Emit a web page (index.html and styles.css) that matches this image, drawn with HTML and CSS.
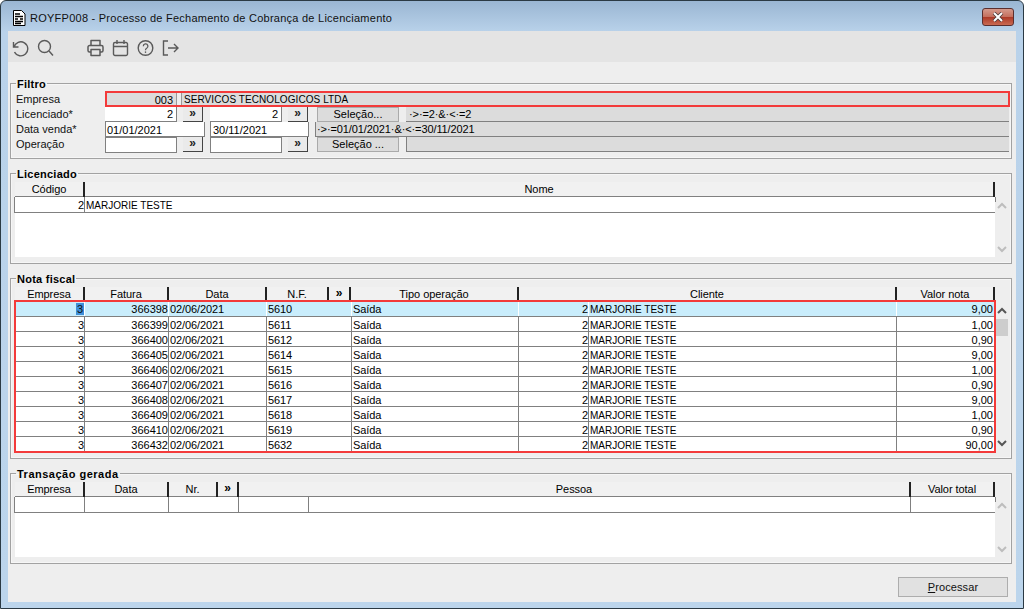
FILE: index.html
```html
<!DOCTYPE html>
<html lang="pt-BR">
<head>
<meta charset="utf-8">
<title>ROYFP008</title>
<link rel="stylesheet" href="styles.css">
</head>
<body>
<div class="window">
  <header class="titlebar">
    <svg class="doc-icon" width="14" height="16" viewBox="0 0 14 16"><path d="M1.500.5h8l3.500 3.500v11.500h-11.500z" fill="#fff" stroke="#000"/><path d="M3 4h5M3 6.500h8M3 9h3M8 9h3M3 11.500h8M3 13.500h6" stroke="#000" stroke-width="1.300"/></svg>
    <span class="title-text">ROYFP008 - Processo de Fechamento de Cobrança de Licenciamento</span>
    <div class="close-btn"><svg width="14" height="10" viewBox="0 0 14 10"><path d="M3 1l8 8M11 1l-8 8" stroke="#4a3a3a" stroke-width="3.600"/><path d="M3 1l8 8M11 1l-8 8" stroke="#fff" stroke-width="2"/></svg></div>
  </header>
  <div class="client">
    <nav class="toolbar">
      <svg class="tool" width="18" height="18" viewBox="0 0 18 18"><path d="M2.500 3v5h5M3 8a7 7 0 1 1 .5 5" fill="none" stroke="#5a5a5a" stroke-width="1.400"/></svg>
      <svg class="tool" width="17" height="18" viewBox="0 0 17 18"><circle cx="7.500" cy="7.500" r="6" fill="none" stroke="#5a5a5a" stroke-width="1.400"/><path d="M12 12l4 4.500" stroke="#5a5a5a" stroke-width="1.400"/></svg>
      <svg class="tool tool-print" width="17" height="18" viewBox="0 0 17 18"><path d="M4 6V1.500h9V6M4 13H2.500a1.500 1.500 0 0 1-1.500-1.500V8a1.500 1.500 0 0 1 1.500-1.500h12A1.500 1.500 0 0 1 16 8v3.500a1.500 1.500 0 0 1-1.500 1.500H13M4 10.500h9v6H4z" fill="none" stroke="#5a5a5a" stroke-width="1.500" stroke-linejoin="round"/></svg>
      <svg class="tool" width="17" height="18" viewBox="0 0 17 18"><path d="M3 3.500h11a1.500 1.500 0 0 1 1.500 1.500v10a1.500 1.500 0 0 1-1.500 1.500H3A1.500 1.500 0 0 1 1.500 15V5A1.500 1.500 0 0 1 3 3.500zM1.500 7.500h14M5 1v4M12 1v4" fill="none" stroke="#5a5a5a" stroke-width="1.400"/></svg>
      <svg class="tool" width="17" height="18" viewBox="0 0 17 18"><circle cx="8.500" cy="9" r="7.300" fill="none" stroke="#5a5a5a" stroke-width="1.400"/><path d="M6.300 7.200a2.300 2.300 0 1 1 3.400 2c-.9.500-1.200 1-1.200 2" fill="none" stroke="#5a5a5a" stroke-width="1.300"/><path d="M8.500 12.400v1.500" stroke="#5a5a5a" stroke-width="1.300"/></svg>
      <svg class="tool" width="17" height="18" viewBox="0 0 17 18"><path d="M6 2H1.500v14H6M6 9h10M12 5l4 4-4 4" fill="none" stroke="#5a5a5a" stroke-width="1.400"/></svg>
    </nav>
    <main class="content">
      <fieldset class="group group-filtro">
        <legend>Filtro</legend>
        <div class="frow frow-empresa">
          <span class="flabel">Empresa</span>
          <div class="red-box">
            <span class="ro ro-code">003</span>
            <span class="ro ro-name">SERVICOS TECNOLOGICOS LTDA</span>
          </div>
        </div>
        <div class="frow">
          <span class="flabel">Licenciado*</span>
          <span class="inp inp-num">2</span><span class="more">»</span>
          <span class="inp inp-num inp-second">2</span><span class="more">»</span>
          <span class="sel-btn">Seleção...</span>
          <span class="result result-short">·&gt;·=2·&amp;·&lt;·=2</span>
        </div>
        <div class="frow">
          <span class="flabel">Data venda*</span>
          <span class="inp-date">01/01/2021</span>
          <span class="inp-date inp-date2">30/11/2021</span>
          <span class="result result-long">·&gt;·=01/01/2021·&amp;·&lt;·=30/11/2021</span>
        </div>
        <div class="frow">
          <span class="flabel">Operação</span>
          <span class="inp inp-box"></span><span class="more">»</span>
          <span class="inp inp-box inp-second"></span><span class="more">»</span>
          <span class="sel-btn">Seleção ...</span>
          <span class="result result-short result-empty"></span>
        </div>
      </fieldset>

      <fieldset class="group group-lic">
        <legend>Licenciado</legend>
        <div class="gridwrap">
          <div class="grid">
            <div class="hrow cols-lic"><span>Código</span><span>Nome</span></div>
            <div class="rows rows-short">
              <div class="row cols-lic"><span class="r">2</span><span class="caps">MARJORIE TESTE</span></div>
            </div>
          </div>
          <div class="sbar sbar-off">
            <svg width="12" height="8" viewBox="0 0 12 8"><path d="M2 6l4-4 4 4" fill="none" stroke="currentColor" stroke-width="2"/></svg>
            <svg width="12" height="8" viewBox="0 0 12 8"><path d="M2 2l4 4 4-4" fill="none" stroke="currentColor" stroke-width="2"/></svg>
          </div>
        </div>
      </fieldset>

      <fieldset class="group group-nota">
        <legend>Nota fiscal</legend>
        <div class="gridwrap">
          <div class="grid">
            <div class="hrow hrow-nota cols-nota-h"><span>Empresa</span><span>Fatura</span><span>Data</span><span>N.F.</span><span class="hmore">»</span><span>Tipo operação</span><span>Cliente</span><span>Valor nota</span></div>
            <div class="rows rows-red">
              <div class="row cols-nota current"><span class="r"><b class="mark">3</b></span><span class="r">366398</span><span>02/06/2021</span><span>5610</span><span class="focus">Saída</span><span class="r">2</span><span class="caps">MARJORIE TESTE</span><span class="r">9,00</span></div>
              <div class="row cols-nota"><span class="r">3</span><span class="r">366399</span><span>02/06/2021</span><span>5611</span><span>Saída</span><span class="r">2</span><span class="caps">MARJORIE TESTE</span><span class="r">1,00</span></div>
              <div class="row cols-nota"><span class="r">3</span><span class="r">366400</span><span>02/06/2021</span><span>5612</span><span>Saída</span><span class="r">2</span><span class="caps">MARJORIE TESTE</span><span class="r">0,90</span></div>
              <div class="row cols-nota"><span class="r">3</span><span class="r">366405</span><span>02/06/2021</span><span>5614</span><span>Saída</span><span class="r">2</span><span class="caps">MARJORIE TESTE</span><span class="r">9,00</span></div>
              <div class="row cols-nota"><span class="r">3</span><span class="r">366406</span><span>02/06/2021</span><span>5615</span><span>Saída</span><span class="r">2</span><span class="caps">MARJORIE TESTE</span><span class="r">1,00</span></div>
              <div class="row cols-nota"><span class="r">3</span><span class="r">366407</span><span>02/06/2021</span><span>5616</span><span>Saída</span><span class="r">2</span><span class="caps">MARJORIE TESTE</span><span class="r">0,90</span></div>
              <div class="row cols-nota"><span class="r">3</span><span class="r">366408</span><span>02/06/2021</span><span>5617</span><span>Saída</span><span class="r">2</span><span class="caps">MARJORIE TESTE</span><span class="r">9,00</span></div>
              <div class="row cols-nota"><span class="r">3</span><span class="r">366409</span><span>02/06/2021</span><span>5618</span><span>Saída</span><span class="r">2</span><span class="caps">MARJORIE TESTE</span><span class="r">1,00</span></div>
              <div class="row cols-nota"><span class="r">3</span><span class="r">366410</span><span>02/06/2021</span><span>5619</span><span>Saída</span><span class="r">2</span><span class="caps">MARJORIE TESTE</span><span class="r">0,90</span></div>
              <div class="row cols-nota"><span class="r">3</span><span class="r">366432</span><span>02/06/2021</span><span>5632</span><span>Saída</span><span class="r">2</span><span class="caps">MARJORIE TESTE</span><span class="r">90,00</span></div>
            </div>
          </div>
          <div class="sbar sbar-on">
            <svg width="12" height="8" viewBox="0 0 12 8"><path d="M2 6l4-4 4 4" fill="none" stroke="currentColor" stroke-width="2"/></svg>
            <div class="thumb"></div>
            <svg class="sdown" width="12" height="8" viewBox="0 0 12 8"><path d="M2 2l4 4 4-4" fill="none" stroke="currentColor" stroke-width="2"/></svg>
          </div>
        </div>
      </fieldset>

      <fieldset class="group group-trans">
        <legend>Transação gerada</legend>
        <div class="gridwrap">
          <div class="grid">
            <div class="hrow cols-trans-h"><span>Empresa</span><span>Data</span><span>Nr.</span><span class="hmore">»</span><span>Pessoa</span><span>Valor total</span></div>
            <div class="rows rows-short">
              <div class="row cols-trans"><span></span><span></span><span></span><span></span><span></span><span></span></div>
            </div>
          </div>
          <div class="sbar sbar-off">
            <svg width="12" height="8" viewBox="0 0 12 8"><path d="M2 6l4-4 4 4" fill="none" stroke="currentColor" stroke-width="2"/></svg>
            <svg width="12" height="8" viewBox="0 0 12 8"><path d="M2 2l4 4 4-4" fill="none" stroke="currentColor" stroke-width="2"/></svg>
          </div>
        </div>
      </fieldset>

      <div class="actions"><button class="process" type="button"><u>P</u>rocessar</button></div>
    </main>
  </div>
</div>
</body>
</html>
```
FILE: styles.css
```css
* { box-sizing: border-box; }
html, body { margin: 0; padding: 0; }
body {
  width: 1024px;
  height: 610px;
  overflow: hidden;
  background: #fff;
  font: 11px/14px "Liberation Sans", Arial, sans-serif;
  color: #000;
}
.window {
  width: 1024px;
  height: 609px;
  display: flex;
  flex-direction: column;
  padding: 0 7px 6px;
  border: 1px solid #2b3a44;
  border-radius: 6px 6px 0 0;
  background: linear-gradient(180deg, #9ab6d3 0, #b9d2ea 31px, #bcd5ec 100%);
}
.titlebar {
  height: 30px;
  flex: none;
  display: flex;
  align-items: center;
  padding-left: 4px;
}
.doc-icon { flex: none; margin-top: 3px; }
.title-text {
  margin: 4px 0 0 4px;
  font: 11px/16px "Liberation Sans", Arial, sans-serif;
  letter-spacing: .25px;
  color: #111;
  flex: 1;
}
.close-btn {
  width: 32px;
  height: 18px;
  margin: 1px 2px 0 0;
  display: flex;
  align-items: center;
  justify-content: center;
  border: 1px solid #5b2f2f;
  border-radius: 3px;
  background: linear-gradient(180deg, #d59a8c 0, #c5705f 48%, #ad3a28 52%, #c96a52 100%);
}
.client {
  flex: 1;
  display: flex;
  flex-direction: column;
  background: #eeeeee;
  min-height: 0;
}
.toolbar {
  height: 31px;
  flex: none;
  display: flex;
  align-items: center;
  padding: 2px 0 0 3px;
  background: #e4e4e4;
  gap: 8px;
}
.tool { flex: none; }
.tool-print { margin-left: 25px; }
.content {
  flex: 1;
  padding: 15px 0 0 2px;
  display: flex;
  flex-direction: column;
  gap: 8px;
}
.group {
  margin: 0;
  width: 1002px;
  padding: 0 0 0 4px;
  border: 1px solid #a2a2a2;
  box-shadow: inset 0 0 0 1px #f6f6f6;
  flex: none;
}
.group legend {
  margin-left: 1px;
  padding: 1px 1px 0;
  height: 13px;
  font-weight: 700;
  font-size: 11px;
  line-height: 13px;
  letter-spacing: .25px;
}
.group-trans legend { letter-spacing: .5px; }
.group-filtro { height: 82px; }
.group-lic { height: 97px; padding-top: 2px; }
.group-nota { height: 187px; padding-top: 2px; }
.group-trans { height: 97px; padding-top: 2px; }

.frow { display: flex; height: 15px; }
.frow-empresa { height: 16px; margin-top: 1px; }
.flabel { width: 90px; flex: none; color: #111; padding-left: 1px; }
.frow-empresa .flabel { padding-top: 1px; }
.red-box { flex: 1; display: flex; height: 16px; margin-right: 1px; outline: 2px solid #f33a3a; outline-offset: -2px; }
.ro { background: #dcdcdc; padding: 2px 3px 0; height: 16px; }
.ro-code { width: 72px; flex: none; text-align: right; border-right: 1px solid #9a9a9a; }
.ro-name { flex: 1; margin-left: 4px; border-left: 1px solid #9a9a9a; padding-left: 2px; font-size: 10px; letter-spacing: .08px; }
.inp { width: 72px; height: 15px; background: #fff; border-right: 1px solid #808080; border-bottom: 1px solid #808080; flex: none; padding: 0 3px; }
.inp-num { text-align: right; }
.inp-box { border: 1px solid #808080; height: 16px; }
.inp-second { margin-left: 7px; }
.more {
  width: 20px;
  height: 15px;
  margin-left: 6px;
  flex: none;
  text-align: center;
  font-weight: 700;
  line-height: 13px;
  font-size: 12px;
  background: #eaeaea;
  border-right: 1px solid #444;
  border-bottom: 1px solid #444;
  color: #222;
}
.sel-btn {
  width: 82px;
  height: 15px;
  margin-left: 9px;
  flex: none;
  background: #dcdcdc;
  border: 1px solid #aaa;
  text-align: center;
  line-height: 13px;
}
.result { flex: 1; height: 15px; background: #dcdcdc; padding: 0 3px; margin-right: 2px; letter-spacing: -.1px; }
.result-short { margin-left: 7px; border-bottom: 1px solid #808080; }
.result-long { margin-left: 6px; border-left: 1px solid #808080; border-bottom: 1px solid #808080; padding-left: 1px; }
.result-empty { border: 1px solid #808080; border-width: 1px 0 1px 1px; height: 16px; margin-top: -1px; }
.inp-date { width: 100px; height: 15px; background: #fff; border: 1px solid #808080; border-top-width: 0; padding: 1px 0 0 1px; flex: none; }
.inp-date2 { margin-left: 5px; width: 99px; padding-left: 2px; }

.gridwrap { display: flex; }
.grid { width: 980px; flex: none; }
.hrow { display: grid; height: 15px; background: #f1f1f1; border-bottom: 1px solid #808080; }
.hrow-nota { height: 14px; border-bottom: 0; }
.hrow span { text-align: center; border-right: 2px solid #222; line-height: 15px; letter-spacing: -.05px; }
.hrow .hmore { font-size: 12px; font-weight: 700; line-height: 13px; }
.cols-lic { grid-template-columns: 70px 1fr; }
.cols-nota-h { grid-template-columns: 70px 84px 98px 62px 22px 168px 378px 98px; }
.cols-nota { grid-template-columns: 70px 84px 98px 85px 167px 70px 308px 98px; }
.cols-trans-h { grid-template-columns: 70px 84px 49px 21px 672px 84px; }
.cols-trans { grid-template-columns: 70px 84px 70px 70px 602px 84px; }
.rows { background: #fff; }
.rows-short { height: 60px; }
.rows-red { outline: 2px solid #f33a3a; outline-offset: -1px; position: relative; }
.row { display: grid; height: 15px; border-bottom: 1px solid #808080; background: #fff; }
.rows-red .row:first-child { height: 16px; }
.rows-short .row { height: 16px; border-left: 1px solid #808080; border-right: 1px solid #808080; margin-left: -1px; margin-right: -1px; }
.row span { border-right: 1px solid #808080; padding: 0 1px; white-space: nowrap; overflow: hidden; line-height: 16px; letter-spacing: -.1px; }
.row span.caps { font-size: 10px; letter-spacing: 0; padding-top: 1px; }
.row span:last-child { border-right: 0; }
.row .r { text-align: right; padding-right: 0; letter-spacing: 0; }
.rows-red .row .r:last-child { padding-right: 2px; }
.current { background: #c9edfc; }
.current span { border-color: #fff; }
.mark { font-weight: 400; background: #3f8fd8; padding: 0 1px; color: #111; }
.focus { background: #c9edfc; }
.sbar { width: 15px; flex: none; display: flex; flex-direction: column; align-items: flex-start; background: #eee; padding-left: 1px; }
.sbar svg { display: block; }
.sbar-off { height: 51px; margin-top: 20px; justify-content: space-between; color: #bdbdbd; }
.sbar-on { height: 140px; margin-top: 20px; color: #555; }
.thumb { width: 12px; height: 17px; background: #cdcdcd; margin-top: 4px; }
.sdown { margin-top: auto; }
.actions { display: flex; justify-content: flex-end; padding: 5px 8px 0 0; }
.process {
  width: 110px;
  height: 20px;
  background: #e1e1e1;
  border: 1px solid #adadad;
  font: 11px/14px "Liberation Sans", Arial, sans-serif;
  letter-spacing: .1px;
  padding: 0;
  color: #111;
}
```
